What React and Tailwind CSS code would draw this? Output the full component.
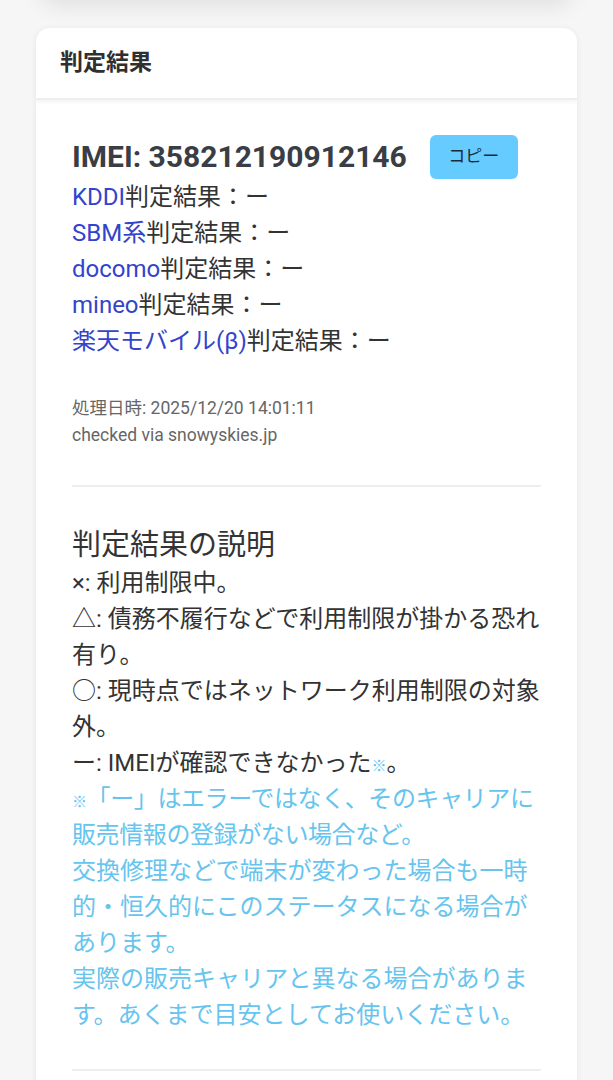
const carriers = ['KDDI', 'SBM系', 'docomo', 'mineo', '楽天モバイル(β)'];

export default function App() {
  return (
    <div
      className="min-h-[1080px] bg-[#f6f6f6] border-r border-[#d4d4d4] pt-[28px] pb-10 text-[#333]"
      style={{ fontFamily: 'Roboto, "Noto Sans CJK JP", sans-serif' }}
    >
      {/* previous card, only its shadow is in view */}
      <div className="mx-[40px] -mt-[68px] mb-[28px] h-[40px] rounded-2xl bg-white shadow-[0_6px_22px_rgba(0,0,0,0.09)]" />

      {/* ── Result card ─────────────────────────────────────── */}
      <div className="mx-[36px] rounded-[14px] bg-white shadow-[0_1px_6px_rgba(0,0,0,0.07)] overflow-hidden">
        <div className="px-[24px] h-[72px] flex items-center border-b-2 border-[#eee] shadow-[0_2px_4px_rgba(0,0,0,0.05)]">
          <h2 className="text-[23px] font-bold text-[#2f2f2f]">判定結果</h2>
        </div>

        <div className="px-[36px] pt-[35px]">
          <div className="flex items-center gap-[23px] h-[44px]">
            <p className="text-[30px] font-bold text-[#3a3d44] leading-none">IMEI: 358212190912146</p>
            <button className="w-[88px] h-[44px] rounded-[6px] bg-[#66ccff] text-[17px] text-[#1c2b3a]">コピー</button>
          </div>

          <div className="text-[24px] leading-[36px]">
            {carriers.map(c => (
              <p key={c}>
                <a className="text-[#3344cc]">{c}</a>判定結果：ー
              </p>
            ))}
          </div>

          <div className="mt-[36px] text-[17.5px] leading-[27px] text-[#666]">
            <p>処理日時: 2025/12/20 14:01:11</p>
            <p>checked via snowyskies.jp</p>
          </div>

          <hr className="mt-[36px] border-t-2 border-[#eee]" />

          <h3 className="mt-[38px] text-[29px] leading-[40px] text-[#333]">判定結果の説明</h3>
          <div className="text-[24px] leading-[36px]">
            <p>×: 利用制限中。</p>
            <p>△: 債務不履行などで利用制限が掛かる恐れ有り。</p>
            <p>○: 現時点ではネットワーク利用制限の対象外。</p>
            <p>ー: IMEIが確認できなかった<span className="text-[#66c4ee] text-[15px] leading-none">※</span>。</p>
            <div className="text-[#66c4ee]">
              <p className="tracking-[-0.4px]"><span className="text-[15px] leading-none">※</span>「ー」はエラーではなく、そのキャリアに販売情報の登録がない場合など。</p>
              <p>交換修理などで端末が変わった場合も一時的・恒久的にこのステータスになる場合があります。</p>
              <p>実際の販売キャリアと異なる場合があります。あくまで目安としてお使いください。</p>
            </div>
          </div>

          <hr className="mt-[36px] border-t-2 border-[#eee]" />
          <div className="h-[40px]" />
        </div>
      </div>
    </div>
  );
}
